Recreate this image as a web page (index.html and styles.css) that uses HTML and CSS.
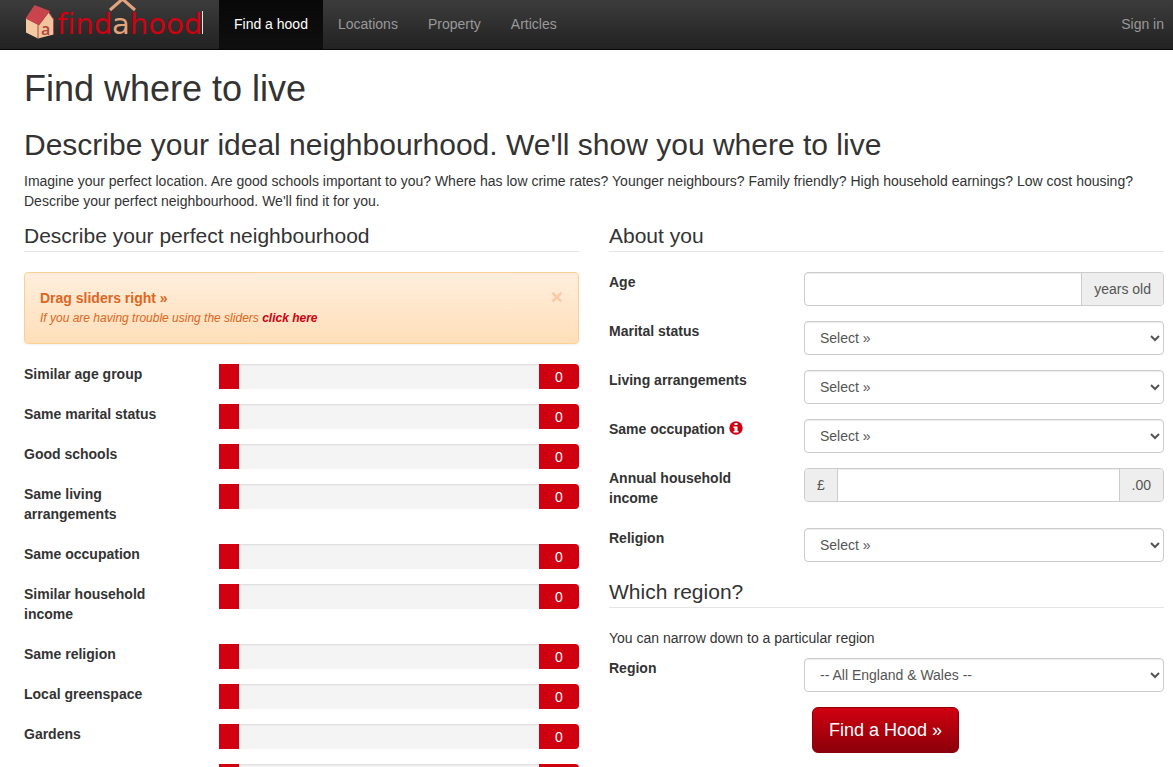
FILE: index.html
```html
<!DOCTYPE html>
<html lang="en">
<head>
  <meta charset="utf-8">
  <meta name="viewport" content="width=device-width, initial-scale=1">
  <title>Find where to live</title>
  <link rel="stylesheet" href="styles.css">
</head>
<body>
  <nav class="navbar">
    <a class="brand" href="#" aria-label="findahood">
      <svg width="184" height="49" viewBox="0 0 184 49">
        <!-- house -->
        <path d="M2 18 L15 25 L14 38.500 L2 32.500 Z" fill="#f3cba3"/>
        <path d="M14 38.500 V25.500 L24.500 12 L29.500 19 V34.500 Z" fill="#eec59c"/>
        <path d="M10.500 5 L26 11 L15 25.500 L1.500 18.500 Z" fill="#c8454d"/>
        <path d="M14 38.500 V25.500 L24.500 12 L29.500 19.500 V34.500" fill="none" stroke="#b5433f" stroke-width="1"/>
        <text class="house-letter" x="17" y="35">a</text>
        <!-- wordmark with a roof over the a -->
        <text class="wordmark" x="33" y="34">find<tspan class="peach">a</tspan>hood</text>
        <path d="M86 10 L98.500 -1 L111 10" fill="none" stroke="#e3a47b" stroke-width="3"/>
        <path d="M178.500 11 V34" stroke="#f5dcdc" stroke-width="1"/>
      </svg>
    </a>
    <ul class="nav">
      <li><a class="active" href="#">Find a hood</a></li>
      <li><a href="#">Locations</a></li>
      <li><a href="#">Property</a></li>
      <li><a href="#">Articles</a></li>
    </ul>
    <a class="signin" href="#">Sign in</a>
  </nav>

  <main class="container">
    <h1>Find where to live</h1>
    <h2>Describe your ideal neighbourhood. We'll show you where to live</h2>
    <p class="intro">Imagine your perfect location. Are good schools important to you? Where has low crime rates? Younger neighbours? Family friendly? High household earnings? Low cost housing? Describe your perfect neighbourhood. We'll find it for you.</p>

    <form class="columns">
      <section>
        <h3>Describe your perfect neighbourhood</h3>
        <div class="alert">
          <div>
            <strong>Drag sliders right »</strong>
            <p>If you are having trouble using the sliders <a href="#">click here</a></p>
          </div>
          <button type="button" class="close" aria-label="Close">×</button>
        </div>

        <div class="row">
          <label for="s-age">Similar age group</label>
          <div class="slider"><input type="range" id="s-age" min="0" max="10" value="0"><output for="s-age">0</output></div>
        </div>
        <div class="row">
          <label for="s-marital">Same marital status</label>
          <div class="slider"><input type="range" id="s-marital" min="0" max="10" value="0"><output for="s-marital">0</output></div>
        </div>
        <div class="row">
          <label for="s-schools">Good schools</label>
          <div class="slider"><input type="range" id="s-schools" min="0" max="10" value="0"><output for="s-schools">0</output></div>
        </div>
        <div class="row">
          <label for="s-living">Same living arrangements</label>
          <div class="slider"><input type="range" id="s-living" min="0" max="10" value="0"><output for="s-living">0</output></div>
        </div>
        <div class="row">
          <label for="s-occupation">Same occupation</label>
          <div class="slider"><input type="range" id="s-occupation" min="0" max="10" value="0"><output for="s-occupation">0</output></div>
        </div>
        <div class="row">
          <label for="s-income">Similar household income</label>
          <div class="slider"><input type="range" id="s-income" min="0" max="10" value="0"><output for="s-income">0</output></div>
        </div>
        <div class="row">
          <label for="s-religion">Same religion</label>
          <div class="slider"><input type="range" id="s-religion" min="0" max="10" value="0"><output for="s-religion">0</output></div>
        </div>
        <div class="row">
          <label for="s-green">Local greenspace</label>
          <div class="slider"><input type="range" id="s-green" min="0" max="10" value="0"><output for="s-green">0</output></div>
        </div>
        <div class="row">
          <label for="s-gardens">Gardens</label>
          <div class="slider"><input type="range" id="s-gardens" min="0" max="10" value="0"><output for="s-gardens">0</output></div>
        </div>
        <div class="row">
          <label for="s-crime">Low crime</label>
          <div class="slider"><input type="range" id="s-crime" min="0" max="10" value="0"><output for="s-crime">0</output></div>
        </div>
      </section>

      <section>
        <h3>About you</h3>
        <div class="row">
          <label for="age">Age</label>
          <div class="input-group"><input type="text" id="age"><span class="addon">years old</span></div>
        </div>
        <div class="row">
          <label for="marital">Marital status</label>
          <select id="marital"><option>Select »</option></select>
        </div>
        <div class="row">
          <label for="living">Living arrangements</label>
          <select id="living"><option>Select »</option></select>
        </div>
        <div class="row">
          <label for="occupation">Same occupation
            <svg class="info" width="14" height="14" viewBox="0 0 14 14">
              <circle cx="7" cy="7" r="6.700" fill="#d00010"/>
              <path d="M5.500 2h3v2h-3z M4.500 5.500h4v4.500h1v1.500h-5V10h1V7h-1z" fill="#fff"/>
            </svg>
          </label>
          <select id="occupation"><option>Select »</option></select>
        </div>
        <div class="row">
          <label for="income">Annual household income</label>
          <div class="input-group"><span class="addon">£</span><input type="text" id="income"><span class="addon">.00</span></div>
        </div>
        <div class="row">
          <label for="religion">Religion</label>
          <select id="religion"><option>Select »</option></select>
        </div>

        <h3>Which region?</h3>
        <p class="help">You can narrow down to a particular region</p>
        <div class="row">
          <label for="region">Region</label>
          <select id="region"><option>-- All England &amp; Wales --</option></select>
        </div>
        <div class="row">
          <button type="submit" class="btn">Find a Hood »</button>
        </div>
      </section>
    </form>
  </main>

  <script>
    document.querySelectorAll('.slider input').forEach(input => {
      input.addEventListener('input', () => {
        input.nextElementSibling.value = input.value;
      });
    });
  </script>
</body>
</html>
```
FILE: styles.css
```css
* { box-sizing: border-box; }
html { height: 100%; overflow: hidden; }
body { height: 100%; margin: 0; overflow-y: auto; scrollbar-width: none; font-family: "Liberation Sans", Arial, sans-serif; font-size: 14px; line-height: 20px; color: #333; background: #fff; }
h1, h2, h3 { font-weight: 500; margin: 0; }
p { margin: 0; }
input, select, button { font-family: inherit; font-size: 14px; }

.navbar { display: flex; height: 50px; padding: 0 9px 0 24px; background: linear-gradient(#3c3c3c, #222); border-bottom: 1px solid #080808; }
.navbar a { color: #999; text-decoration: none; }
.brand { width: 195px; }
.brand svg { display: block; }
.wordmark { font-family: "DejaVu Sans", Verdana, sans-serif; font-size: 29px; font-variant-ligatures: none; fill: #d00010; }
.wordmark .peach { fill: #e3a47b; }
.house-letter { font-family: "Open Sans", sans-serif; font-size: 16px; font-weight: 600; fill: #b5433f; }
.nav { display: flex; flex: 1; list-style: none; margin: 0; padding: 0; }
.nav a, .signin { display: block; padding: 14px 15px 15px; }
.nav .active { color: #fff; background: linear-gradient(#080808, #0f0f0f); }
.navbar .signin { padding-right: 0; }

.container { padding: 19px 9px 0 24px; }
h1 { font-size: 36px; line-height: 39px; margin-bottom: 20px; }
h2 { font-size: 30px; line-height: 33px; margin-bottom: 10px; }
.intro { margin-bottom: 10px; }
.columns { display: grid; grid-template-columns: 1fr 1fr; gap: 30px; }
h3 { font-size: 21px; line-height: 30px; margin-bottom: 20px; border-bottom: 1px solid #e5e5e5; }

.alert { display: flex; justify-content: space-between; padding: 15px; margin-bottom: 20px; color: #dd6620; background: linear-gradient(#ffeedd, #ffdfb9); border: 1px solid #fccf94; border-radius: 4px; box-shadow: 0 1px 2px rgba(0, 0, 0, .05); }
.alert strong { display: block; }
.alert p { font-size: 12px; font-style: italic; }
.alert a { color: #d00010; font-weight: bold; text-decoration: none; }
.close { align-self: flex-start; padding: 0; border: 0; background: none; font-size: 21px; font-weight: bold; line-height: 18px; color: #f9cba4; cursor: pointer; }

.row { display: grid; grid-template-columns: 165px 1fr; column-gap: 30px; align-items: start; }
.row label { font-weight: bold; margin-bottom: 20px; }
.row > :nth-child(2) { margin-bottom: 15px; }

.slider { display: flex; height: 25px; border-radius: 4px; background: #f4f4f4; box-shadow: inset 0 1px 2px rgba(0, 0, 0, .1); }
.slider input { flex: 1; min-width: 0; height: 25px; margin: 0; appearance: none; background: none; }
.slider input::-webkit-slider-thumb { appearance: none; width: 20px; height: 25px; background: #d00010; border: 0; border-radius: 0; }
.slider output { width: 40px; line-height: 26px; text-align: center; color: #fff; background: #d00010; border-radius: 0 4px 4px 0; }

select, .input-group { width: 100%; height: 34px; color: #555; background: #fff; border: 1px solid #ccc; border-radius: 4px; box-shadow: inset 0 1px 1px rgba(0, 0, 0, .075); }
select { padding: 6px 0 6px 11px; }
.input-group { display: flex; overflow: hidden; }
.input-group input { flex: 1; min-width: 0; padding: 6px 12px; border: 0; background: none; color: #555; }
.addon { padding: 6px 12px; background: #eee; }
.addon:first-child { border-right: 1px solid #ccc; }
.addon:last-child { border-left: 1px solid #ccc; }
.info { vertical-align: -1px; }
.help { margin-bottom: 10px; }

.btn { grid-column: 2; justify-self: start; height: 46px; margin-left: 8px; padding: 0 16px; font-size: 18px; color: #fff; background: linear-gradient(#d00010, #8b0009); border: 1px solid #8b0009; border-radius: 6px; cursor: pointer; }
```
